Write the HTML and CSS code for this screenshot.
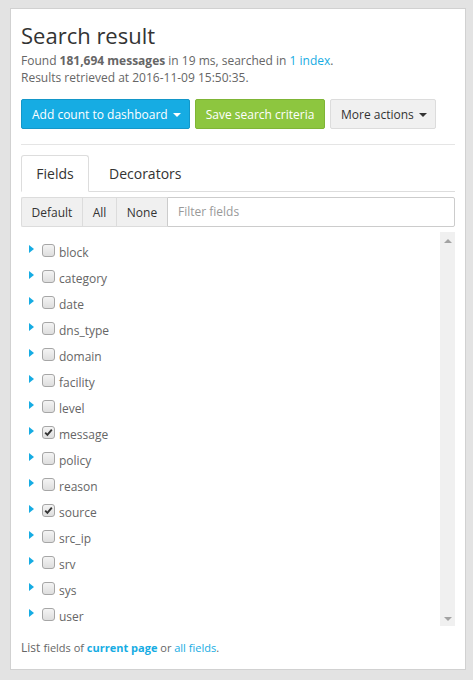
FILE: index.html
```html
<!DOCTYPE html>
<html>
<head>
<meta charset="utf-8">
<link rel="stylesheet" href="styles.css">
</head>
<body>
<div class="card">
  <h1 class="title">Search result</h1>
  <p class="summary">Found <b>181,694 messages</b> in 19 ms, searched in <a class="link">1 index</a>.<br>Results retrieved at 2016-11-09 15:50:35.</p>
  <div class="actions">
    <button class="btn btn-blue">Add count to dashboard <span class="caret"></span></button>
    <button class="btn btn-green">Save search criteria</button>
    <button class="btn btn-grey">More actions <span class="caret dark"></span></button>
  </div>
  <hr class="sep">
  <div class="tabs">
    <div class="tab active">Fields</div>
    <div class="tab">Decorators</div>
  </div>
  <div class="filter">
    <button class="fbtn">Default</button>
    <button class="fbtn">All</button>
    <button class="fbtn">None</button>
    <div class="finput">Filter fields</div>
  </div>
  <div class="listwrap">
    <ul class="fields">
      <li><span class="tri"></span><span class="cb"></span><span class="name">block</span></li>
      <li><span class="tri"></span><span class="cb"></span><span class="name">category</span></li>
      <li><span class="tri"></span><span class="cb"></span><span class="name">date</span></li>
      <li><span class="tri"></span><span class="cb"></span><span class="name">dns_type</span></li>
      <li><span class="tri"></span><span class="cb"></span><span class="name">domain</span></li>
      <li><span class="tri"></span><span class="cb"></span><span class="name">facility</span></li>
      <li><span class="tri"></span><span class="cb"></span><span class="name">level</span></li>
      <li><span class="tri"></span><span class="cb checked"><svg viewBox="0 0 13 13" width="13" height="13"><path d="M3.2 6.6 L5.4 8.9 L9.8 3.6" fill="none" stroke="#333" stroke-width="1.9"/></svg></span><span class="name">message</span></li>
      <li><span class="tri"></span><span class="cb"></span><span class="name">policy</span></li>
      <li><span class="tri"></span><span class="cb"></span><span class="name">reason</span></li>
      <li><span class="tri"></span><span class="cb checked"><svg viewBox="0 0 13 13" width="13" height="13"><path d="M3.2 6.6 L5.4 8.9 L9.8 3.6" fill="none" stroke="#333" stroke-width="1.9"/></svg></span><span class="name">source</span></li>
      <li><span class="tri"></span><span class="cb"></span><span class="name">src_ip</span></li>
      <li><span class="tri"></span><span class="cb"></span><span class="name">srv</span></li>
      <li><span class="tri"></span><span class="cb"></span><span class="name">sys</span></li>
      <li><span class="tri"></span><span class="cb"></span><span class="name">user</span></li>
    </ul>
    <div class="scrollbar">
      <span class="arrow up"></span>
      <span class="arrow down"></span>
    </div>
  </div>
  <p class="footer">List <span class="small">fields of <a class="link strong">current page</a> or <a class="link">all fields</a>.</span></p>
</div>
</body>
</html>
```

FILE: styles.css
```css
* { box-sizing: border-box; }
html, body { margin: 0; padding: 0; }
body {
  background: #e3e3e3;
  font-family: "Open Sans", "Noto Sans", sans-serif;
  color: #666;
  padding: 8px 7px 10px 10px;
}
.card {
  width: 456px;
  height: 662px;
  background: #fff;
  border: 1px solid #d1d1d1;
  padding: 10px 10px 0 10px;
}
.title {
  margin: 0;
  font-size: 22px;
  font-weight: 400;
  color: #333;
  line-height: 32px;
  height: 33px;
}
.summary {
  margin: 0;
  font-size: 12px;
  line-height: 17px;
  color: #666;
}
.summary b { font-weight: 700; }
.link { color: #16ace3; text-decoration: none; }
.strong { font-weight: 700; }
.actions {
  display: flex;
  gap: 5px;
  margin-top: 13px;
}
.btn {
  font-family: inherit;
  font-size: 12px;
  height: 30px;
  padding: 0 10px;
  border-radius: 2px;
  border: 1px solid transparent;
  cursor: pointer;
  display: flex;
  align-items: center;
  white-space: nowrap;
}
.btn-blue { background: #16ace3; border-color: #1397c9; color: #fff; width: 169px; }
.btn-green { background: #8dc63f; border-color: #7fb536; color: #fff; width: 130px; justify-content: center; }
.btn-grey { background: #f0f0f0; border-color: #dcdcdc; color: #333; width: 106px; }
.caret {
  display: inline-block;
  width: 0; height: 0;
  border-left: 4px solid transparent;
  border-right: 4px solid transparent;
  border-top: 4px solid #fff;
  margin-left: 5px;
  margin-top: 2px;
}
.caret.dark { border-top-color: #333; }
.sep {
  border: 0;
  border-top: 1px solid #e5e5e5;
  margin: 15px 0 10px 0;
}
.tabs {
  display: flex;
  border-bottom: 1px solid #ddd;
  height: 37px;
}
.tab {
  font-size: 14px;
  color: #333;
  padding: 0 16px;
  line-height: 36px;
  border: 1px solid transparent;
  border-radius: 3px 3px 0 0;
  margin-right: 3px;
}
.tab.active {
  border-color: #ddd;
  border-bottom-color: #fff;
  background: #fff;
  height: 37px;
  width: 68px;
  text-align: center;
  padding: 0;
}
.filter {
  display: flex;
  margin-top: 5px;
  height: 30px;
}
.fbtn {
  font-family: inherit;
  font-size: 12px;
  color: #333;
  background: #f0f0f0;
  border: 1px solid #dcdcdc;
  border-right-width: 0;
  padding: 0;
  height: 30px;
}
.fbtn:nth-child(1) { width: 61px; border-radius: 2px 0 0 2px; }
.fbtn:nth-child(2) { width: 34px; }
.fbtn:nth-child(3) { width: 51px; }
.finput {
  flex: 1;
  border: 1px solid #ccc;
  border-radius: 0 2px 2px 0;
  font-size: 12px;
  color: #999;
  line-height: 28px;
  padding-left: 10px;
}
.listwrap {
  display: flex;
  margin-top: 5px;
  height: 394px;
}
.fields {
  list-style: none;
  margin: 0;
  padding: 7px 0 0 0;
  flex: 1;
}
.fields li {
  height: 26px;
  display: flex;
  align-items: center;
  font-size: 12px;
  color: #666;
}
.tri {
  width: 0; height: 0;
  border-top: 4.5px solid transparent;
  border-bottom: 4.5px solid transparent;
  border-left: 5px solid #16ace3;
  margin-left: 8px;
  margin-top: -6px;
}
.cb {
  width: 13px;
  height: 13px;
  border: 1px solid #a6a6a6;
  border-radius: 3px;
  background: linear-gradient(#f4f4f4, #dedede);
  margin-left: 8px;
  margin-top: -4px;
  position: relative;
}
.cb svg { position: absolute; left: -1px; top: -1px; }
.name {
  margin-left: 4px;
}
.scrollbar {
  width: 15px;
  background: #f0f0f0;
  display: flex;
  flex-direction: column;
  justify-content: space-between;
  align-items: center;
  padding: 7px 0 5px 0;
}
.arrow {
  width: 0; height: 0;
  border-left: 4px solid transparent;
  border-right: 4px solid transparent;
}
.arrow.up { border-bottom: 4px solid #a3a3a3; }
.arrow.down { border-top: 4px solid #a3a3a3; }
.footer {
  margin: 13px 0 0 0;
  font-size: 12px;
  color: #666;
}
.small { font-size: 11px; }
```
